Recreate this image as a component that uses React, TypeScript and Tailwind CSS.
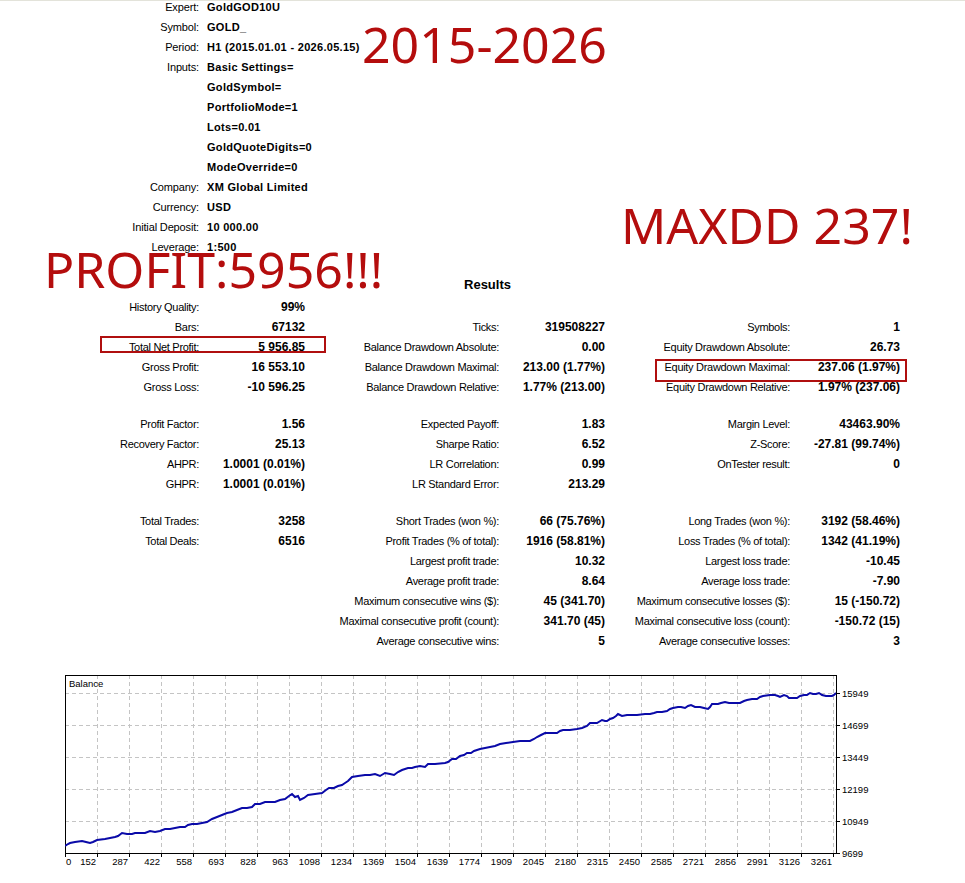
const header: [string, string][] = [
  ["Expert:", "GoldGOD10U"],
  ["Symbol:", "GOLD_"],
  ["Period:", "H1 (2015.01.01 - 2026.05.15)"],
  ["Inputs:", "Basic Settings="],
  ["", "GoldSymbol="],
  ["", "PortfolioMode=1"],
  ["", "Lots=0.01"],
  ["", "GoldQuoteDigits=0"],
  ["", "ModeOverride=0"],
  ["Company:", "XM Global Limited"],
  ["Currency:", "USD"],
  ["Initial Deposit:", "10 000.00"],
  ["Leverage:", "1:500"],
];

// null = short spacer row
const results: (string[] | null)[] = [
  ["History Quality:", "99%", "", "", "", ""],
  ["Bars:", "67132", "Ticks:", "319508227", "Symbols:", "1"],
  ["Total Net Profit:", "5 956.85", "Balance Drawdown Absolute:", "0.00", "Equity Drawdown Absolute:", "26.73"],
  ["Gross Profit:", "16 553.10", "Balance Drawdown Maximal:", "213.00 (1.77%)", "Equity Drawdown Maximal:", "237.06 (1.97%)"],
  ["Gross Loss:", "-10 596.25", "Balance Drawdown Relative:", "1.77% (213.00)", "Equity Drawdown Relative:", "1.97% (237.06)"],
  null,
  ["Profit Factor:", "1.56", "Expected Payoff:", "1.83", "Margin Level:", "43463.90%"],
  ["Recovery Factor:", "25.13", "Sharpe Ratio:", "6.52", "Z-Score:", "-27.81 (99.74%)"],
  ["AHPR:", "1.0001 (0.01%)", "LR Correlation:", "0.99", "OnTester result:", "0"],
  ["GHPR:", "1.0001 (0.01%)", "LR Standard Error:", "213.29", "", ""],
  null,
  ["Total Trades:", "3258", "Short Trades (won %):", "66 (75.76%)", "Long Trades (won %):", "3192 (58.46%)"],
  ["Total Deals:", "6516", "Profit Trades (% of total):", "1916 (58.81%)", "Loss Trades (% of total):", "1342 (41.19%)"],
  ["", "", "Largest profit trade:", "10.32", "Largest loss trade:", "-10.45"],
  ["", "", "Average profit trade:", "8.64", "Average loss trade:", "-7.90"],
  ["", "", "Maximum consecutive wins ($):", "45 (341.70)", "Maximum consecutive losses ($):", "15 (-150.72)"],
  ["", "", "Maximal consecutive profit (count):", "341.70 (45)", "Maximal consecutive loss (count):", "-150.72 (15)"],
  ["", "", "Average consecutive wins:", "5", "Average consecutive losses:", "3"],
];

// balance curve, page coordinates
const curve = [
  [65, 846], [68, 844], [70, 843], [75, 842], [82, 841], [86, 842], [90, 843], [93, 842], [97, 840], [105, 839],
  [110, 838], [115, 837], [118, 836], [122, 833], [127, 834], [132, 834], [135, 833], [138, 833], [145, 833],
  [150, 831], [155, 832], [160, 831], [165, 829], [170, 829], [175, 828], [180, 827], [185, 827], [188, 825],
  [192, 824], [197, 824], [202, 823], [207, 822], [212, 819], [217, 817], [222, 815], [227, 813], [232, 812],
  [237, 810], [242, 808], [247, 808], [252, 807], [255, 804], [260, 804], [265, 802], [270, 802], [275, 802],
  [280, 800], [285, 799], [289, 796], [292, 794], [295, 797], [298, 796], [300, 800], [304, 798], [308, 795],
  [315, 794], [322, 793], [326, 790], [329, 788], [334, 788], [338, 786], [342, 785], [345, 783], [348, 781],
  [352, 777], [358, 776], [365, 775], [370, 775], [375, 774], [380, 776], [385, 773], [390, 774], [394, 775],
  [398, 772], [402, 770], [408, 768], [412, 768], [415, 767], [420, 766], [425, 767], [428, 764], [435, 764],
  [445, 763], [448, 762], [452, 759], [456, 759], [460, 756], [464, 755], [467, 753], [471, 753], [474, 751],
  [477, 750], [480, 749], [485, 748], [490, 747], [495, 746], [500, 744], [506, 743], [513, 742], [520, 741],
  [530, 741], [534, 739], [537, 737], [541, 735], [545, 733], [550, 733], [557, 733], [560, 731], [563, 730],
  [570, 730], [577, 729], [582, 728], [587, 726], [590, 723], [597, 723], [602, 720], [605, 721], [607, 721],
  [610, 719], [613, 718], [616, 716], [618, 714], [622, 716], [627, 715], [633, 715], [637, 715], [645, 714],
  [650, 714], [654, 713], [657, 712], [662, 712], [667, 711], [670, 709], [673, 708], [678, 707], [681, 707],
  [685, 708], [688, 706], [691, 705], [695, 707], [700, 707], [704, 708], [708, 709], [710, 707], [712, 704],
  [718, 704], [721, 703], [725, 702], [729, 703], [732, 703], [736, 703], [740, 703], [744, 701], [747, 700],
  [752, 699], [757, 699], [760, 697], [763, 696], [770, 695], [775, 695], [778, 696], [780, 697], [784, 695],
  [787, 696], [789, 698], [795, 698], [797, 698], [800, 696], [804, 695], [807, 695], [810, 693], [813, 694],
  [816, 694], [819, 693], [822, 695], [826, 696], [832, 696], [834, 695], [836, 693],
];

const xLabels = ["0", "152", "287", "422", "558", "693", "828", "963", "1098", "1234", "1369", "1504", "1639", "1774", "1909", "2045", "2180", "2315", "2450", "2585", "2721", "2856", "2991", "3126", "3261"];
const yLabels = ["15949", "14699", "13449", "12199", "10949", "9699"];

function BalanceChart() {
  const W = 771;
  const H = 178;
  const pts = curve.map(([x, y]) => `${x - 65},${y - 675}`).join(" ");
  return (
    <svg width="830" height="208" className="block" style={{ fontFamily: "'Liberation Sans', Arial, sans-serif" }}>
      {[18, 50, 82, 114, 146].map((y) => (
        <line key={"h" + y} x1="0" x2={W} y1={y + 0.5} y2={y + 0.5} stroke="#c4c4c4" strokeDasharray="4 3" />
      ))}
      {Array.from({ length: 24 }, (_, i) => (i + 1) * 32).map((x) => (
        <line key={"v" + x} x1={x + 0.5} x2={x + 0.5} y1="0" y2={H} stroke="#c4c4c4" strokeDasharray="4 3" />
      ))}
      <rect x="0.5" y="0.5" width={W} height={H} fill="none" stroke="#000" />
      <text x="4" y="12" fontSize="9.5" fill="#000">Balance</text>
      <polyline points={pts} fill="none" stroke="#0a0aa8" strokeWidth="2" strokeLinejoin="miter" />
      {yLabels.map((l, i) => (
        <g key={l}>
          <line x1={W} x2={W + 4} y1={18 + i * 32 + 0.5} y2={18 + i * 32 + 0.5} stroke="#000" />
          <text x={W + 6} y={18 + i * 32 + 3.5} fontSize="9.5" fill="#000">{l}</text>
        </g>
      ))}
      {xLabels.map((l, i) => (
        <g key={l}>
          <line x1={i * 32 + 0.5} x2={i * 32 + 0.5} y1={H} y2={H + 4} stroke="#000" />
          <text x={i === 0 ? 1 : i * 32 - 1} y={H + 12} fontSize="9.5" fill="#000" textAnchor={i === 0 ? "start" : "end"}>{l}</text>
        </g>
      ))}
    </svg>
  );
}

export default function App() {
  return (
    <div className="relative w-[965px] h-[883px] overflow-hidden bg-white text-black border-t border-[#e3e3da] font-['Liberation_Sans',Arial,sans-serif] text-[11px]">
      <div className="-mt-[4px]">
        {header.map(([label, value], i) => (
          <div key={i} className="flex h-[20px] items-center">
            <div className="w-[207px] pr-2 text-right tracking-[-0.15px]">{label}</div>
            <div className="font-bold whitespace-nowrap tracking-[0.3px]">{value}</div>
          </div>
        ))}
      </div>

      <div className="mt-[16px] flex h-[24px] items-center justify-center pl-[10px] text-[13px] font-bold">Results</div>

      <div className="grid grid-cols-[207px_98px_202px_98px_193px_102px]">
        {results.map((row, i) =>
          row === null ? (
            <div key={i} className="col-span-6 h-[17px]" />
          ) : (
            row.map((cell, j) => (
              <div
                key={i + "-" + j}
                className={`flex h-[20px] items-center justify-end whitespace-nowrap ${j % 2 === 0 ? "pr-2 tracking-[-0.3px]" : "text-[12px] font-bold"}`}
              >
                {cell}
              </div>
            ))
          )
        )}
      </div>

      <div className="mt-[24px] pl-[65px]">
        <BalanceChart />
      </div>

      {/* annotations drawn over the report */}
      <div className="pointer-events-none absolute left-[362px] top-[18px] font-['Noto_Sans',sans-serif] text-[50px] leading-none text-[#b40d0d]">2015-2026</div>
      <div className="pointer-events-none absolute left-[621px] top-[199px] font-['Noto_Sans',sans-serif] text-[50px] leading-none text-[#b40d0d]">MAXDD 237!</div>
      <div className="pointer-events-none absolute left-[44px] top-[243px] font-['Noto_Sans',sans-serif] text-[50px] leading-none text-[#b40d0d]">PROFIT:5956!!!</div>
      <div className="pointer-events-none absolute left-[100px] top-[335px] h-[17px] w-[226px] border-2 border-[#b00f0f]" />
      <div className="pointer-events-none absolute left-[655px] top-[358px] h-[23px] w-[252px] border-2 border-[#b00f0f]" />
    </div>
  );
}
